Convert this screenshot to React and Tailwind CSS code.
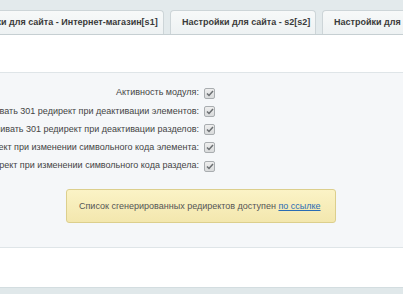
export default function App() {
  const rows = [
    'Активность модуля:',
    'Устанавливать 301 редирект при деактивации элементов:',
    'Устанавливать 301 редирект при деактивации разделов:',
    'Создавать редирект при изменении символьного кода элемента:',
    'Создавать редирект при изменении символьного кода раздела:',
  ];

  const tabs = [
    { t: 'Настройки для сайта - Интернет-магазин[s1]', w: 'w-[217px]' },
    { t: 'Настройки для сайта - s2[s2]', w: 'w-[146px]' },
    { t: 'Настройки для сайта - s3[s3]', w: 'w-[150px]' },
  ];

  return (
    <div className="w-[403px] h-[294px] overflow-hidden bg-white font-['Liberation_Sans',Arial,sans-serif] text-[#333]">
      <div className="h-[35px] bg-[#e3eaec] pt-[10px] overflow-hidden border-b border-[#c6cfd2]">
        <div className="flex gap-[6px] ml-[-53px] whitespace-nowrap">
          {tabs.map(({ t, w }) => (
            <div
              key={t}
              className={`${w} shrink-0 h-[24px] px-[11px] flex items-center rounded-t-[4px] border border-b-0 border-[#cdd5d8] bg-gradient-to-b from-[#f7f9f9] to-[#eef2f3] text-[9px] font-bold text-[#3a3a3a] overflow-hidden`}
            >
              {t}
            </div>
          ))}
        </div>
      </div>
      <div className="h-[37px] bg-white" />
      <div className="h-[176px] bg-[#f5f7f9] border-y border-[#dfe5e8] pt-[11px]">
        <div className="flex flex-col">
          {rows.map((r) => (
            <div key={r} className="flex items-center justify-end w-[215px] h-[18.25px] gap-[5px] whitespace-nowrap">
              <span className="text-[9px] text-[#444]">{r}</span>
              <span className="w-[11px] h-[11px] shrink-0 rounded-[2px] border border-[#a9adb0] bg-gradient-to-b from-[#eeeeee] to-[#d9dbdc] flex items-center justify-center">
                <svg width="8" height="7" viewBox="0 0 8 7">
                  <path d="M1 3.5 L3 5.5 L7 1" fill="none" stroke="#6b6f72" strokeWidth="1.5" />
                </svg>
              </span>
            </div>
          ))}
        </div>
        <div className="mt-[14px] ml-[66px] w-[270px] h-[34px] rounded-[3px] border border-[#dccf8d] bg-gradient-to-b from-[#fbf3c6] to-[#f3e7ae] flex items-center pl-[12px] text-[9px] text-[#555] whitespace-nowrap">
          Список сгенерированных редиректов доступен&nbsp;
          <a href="#" className="text-[#2a6cb3] underline">по ссылке</a>
        </div>
      </div>
      <div className="h-[39px] bg-white" />
      <div className="h-[10px] bg-[#e0e8ea] border-t border-[#d3dde0]" />
    </div>
  );
}
